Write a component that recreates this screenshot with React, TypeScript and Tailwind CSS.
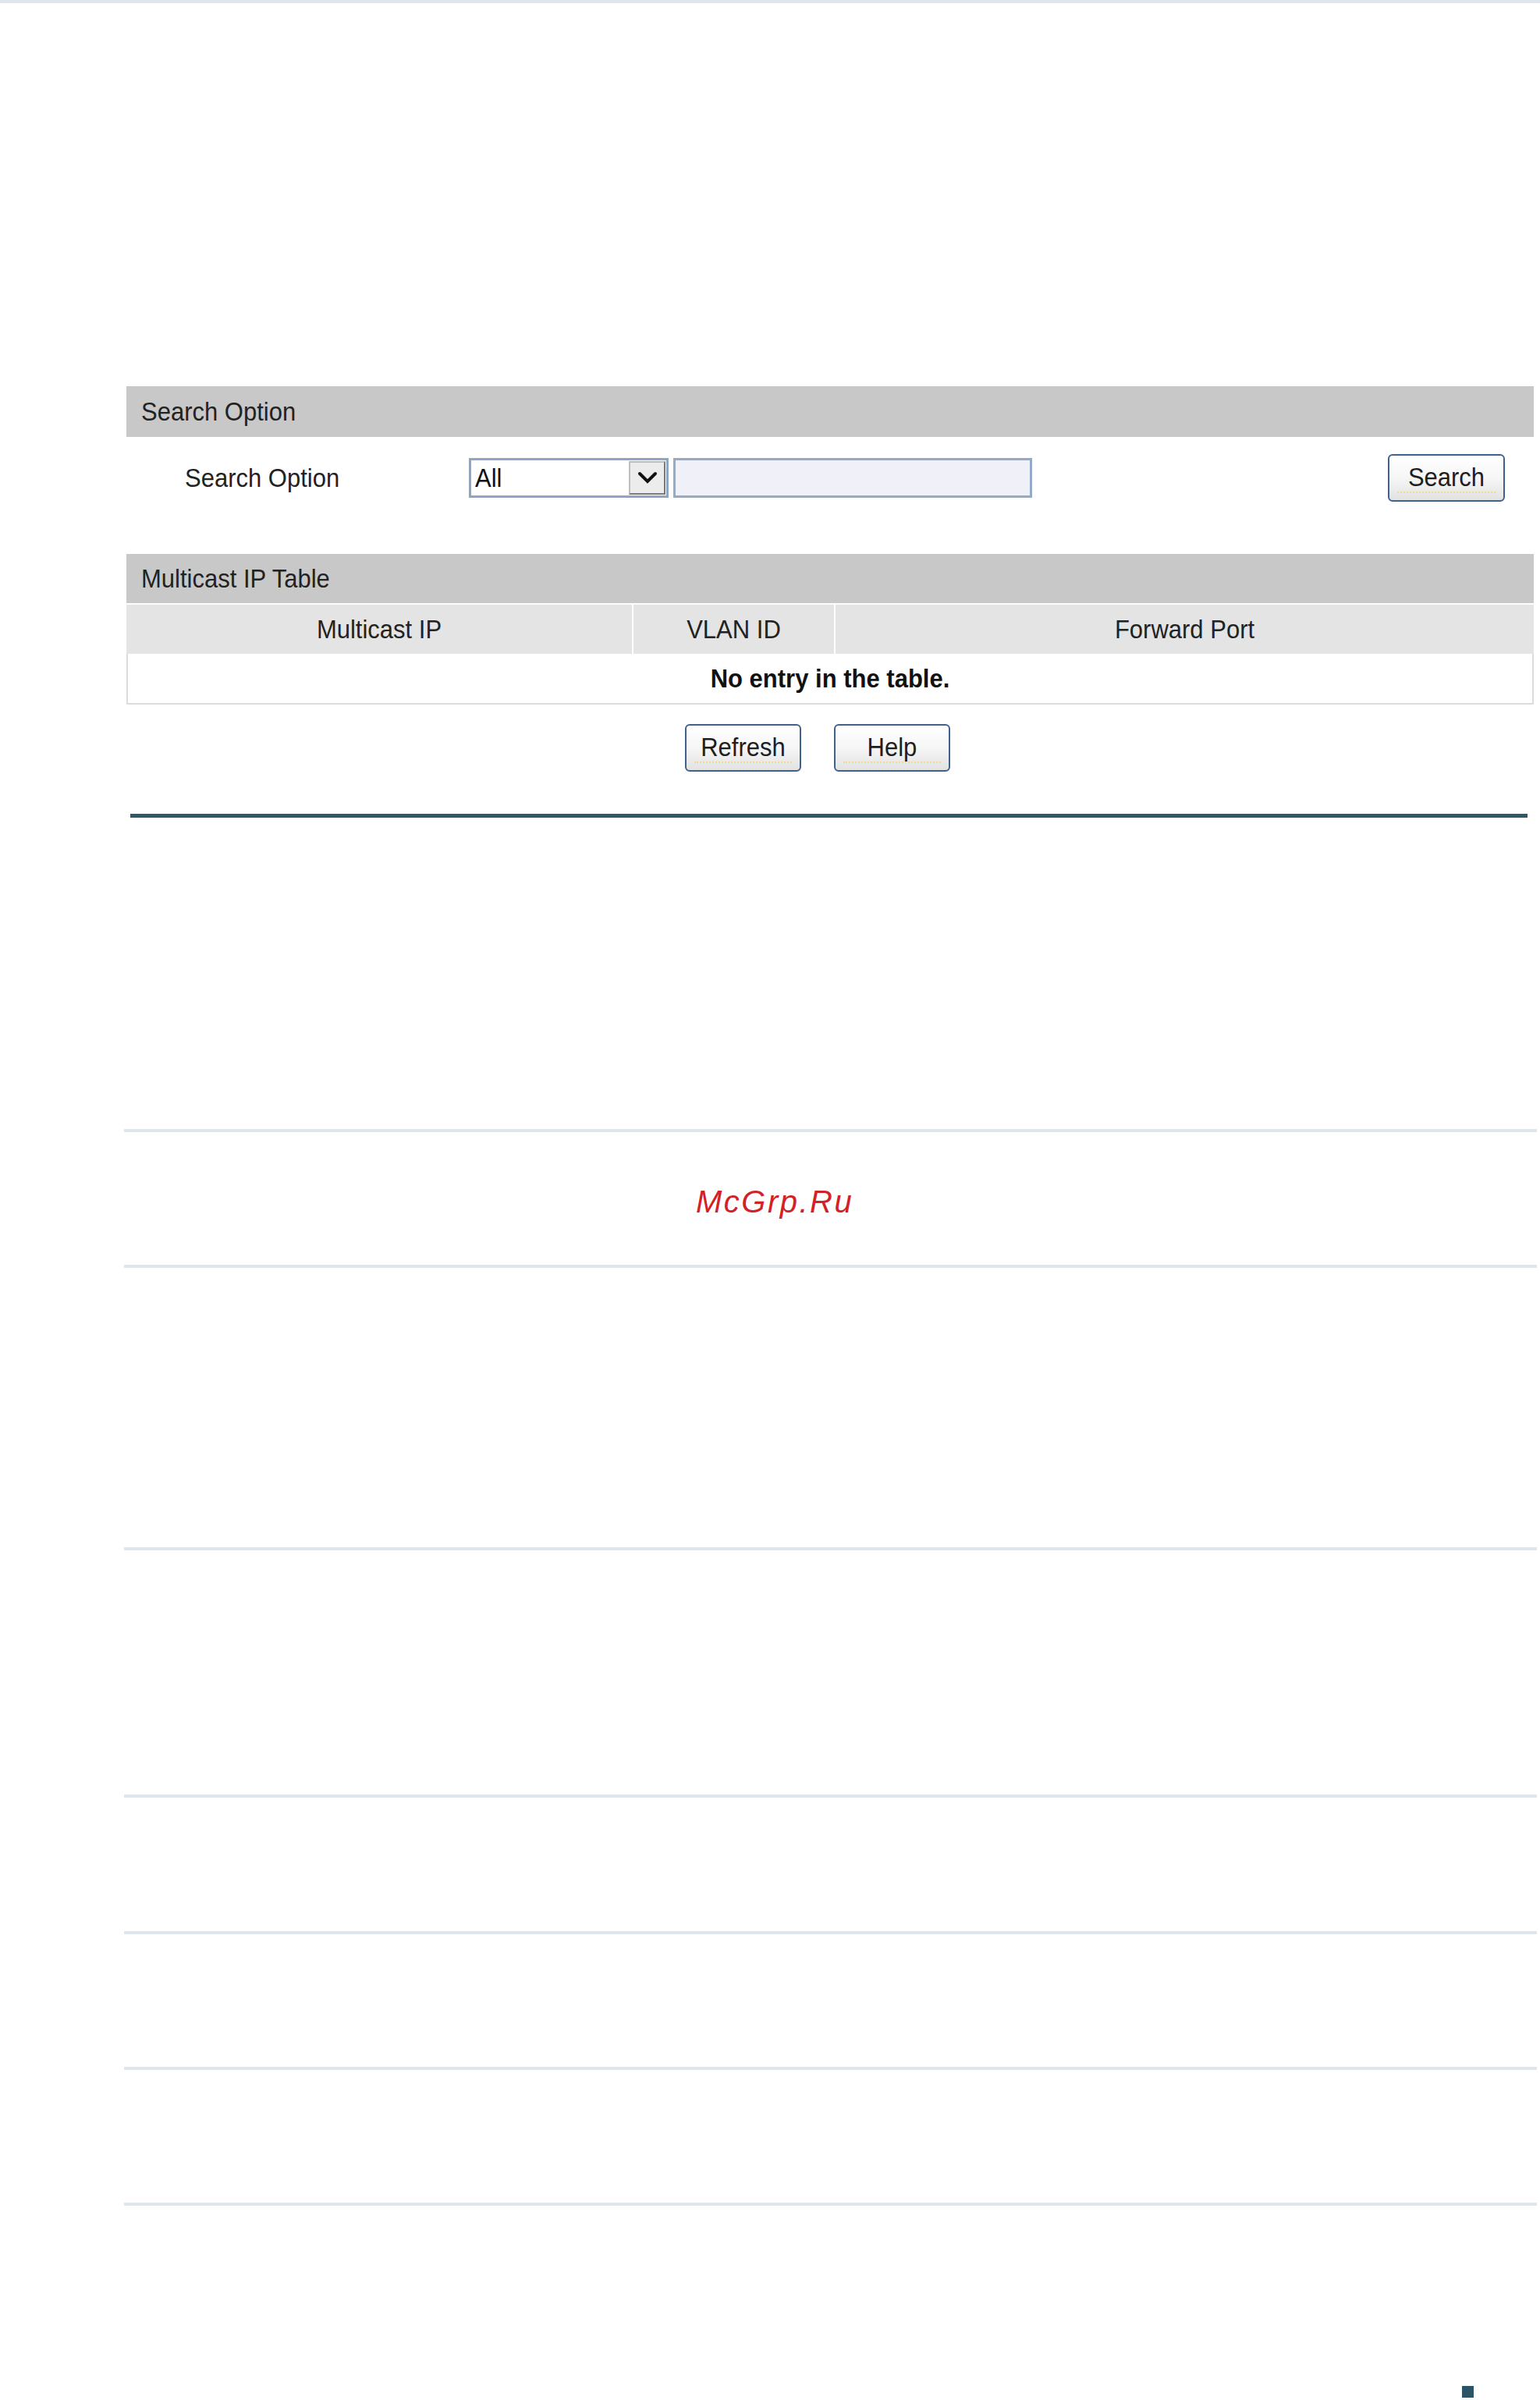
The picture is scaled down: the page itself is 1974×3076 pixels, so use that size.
import React from "react";

function T({ children }: { children: React.ReactNode }) {
  return <span className="inline-block scale-y-[1.1]">{children}</span>;
}

function Btn({ label, w }: { label: string; w: string }) {
  return (
    <div
      className={`relative ${w} h-[61px] rounded-[6px] border-2 border-[#3f6190] bg-gradient-to-b from-white via-[#f6f6f6] to-[#e2e2e2] flex items-center justify-center text-[31px] leading-none text-[#1e1e1e]`}
    >
      <span className="relative -top-[1px] inline-block scale-y-[1.1]">{label}</span>
      <span className="absolute left-[10px] right-[10px] bottom-[9px] border-b-2 border-dotted border-[#efd98f]" />
    </div>
  );
}

function LightLine({ mt }: { mt: string }) {
  return <div className={`${mt} ml-[159px] w-[1811px] h-[4px] bg-[#dde7ec]`} />;
}

export default function App() {
  return (
    <div className="w-[1974px] h-[3076px] bg-white overflow-hidden font-['Liberation_Sans',Arial,sans-serif] text-[#222]">
      <div className="h-[4px] w-full bg-[#dde7ec]" />

      <div className="mt-[491px] ml-[162px] w-[1804px]">
        <div className="h-[65px] bg-[#c8c8c8] flex items-center pl-[19px] text-[31px] leading-none">
          <T>Search Option</T>
        </div>

        <div className="h-[104px] flex items-center pr-[37px]">
          <div className="w-[439px] pl-[75px] text-[31px] leading-none">
            <T>Search Option</T>
          </div>
          <div className="w-[256px] h-[51px] border-[3px] border-[#8ca6c6] bg-white flex items-center justify-between">
            <span className="pl-[5px] text-[31px] leading-none text-[#111]">
              <T>All</T>
            </span>
            <div className="w-[47px] h-[43px] mr-[1px] bg-[#ececec] border-2 border-t-[#bdbdbd] border-l-[#bdbdbd] border-r-[#7a7a7a] border-b-[#7a7a7a] flex items-center justify-center">
              <svg width="26" height="18" viewBox="0 0 26 18">
                <polyline points="3,4 13,14 23,4" fill="none" stroke="#111" strokeWidth="4" strokeLinecap="round" strokeLinejoin="miter" />
              </svg>
            </div>
          </div>
          <div className="ml-[6px] w-[460px] h-[51px] border-[3px] border-[#92abc9] bg-[#eff0f8]" />
          <div className="flex-1" />
          <Btn label="Search" w="w-[150px]" />
        </div>

        <div className="mt-[46px] h-[63px] bg-[#c8c8c8] flex items-center pl-[19px] text-[31px] leading-none">
          <T>Multicast IP Table</T>
        </div>

        <div className="mt-[2px] h-[63px] flex bg-white">
          <div className="w-[648px] bg-[#e4e4e4] flex items-center justify-center text-[31px] leading-none">
            <T>Multicast IP</T>
          </div>
          <div className="w-[2px]" />
          <div className="w-[257px] bg-[#e4e4e4] flex items-center justify-center text-[31px] leading-none">
            <T>VLAN ID</T>
          </div>
          <div className="w-[2px]" />
          <div className="flex-1 bg-[#e4e4e4] flex items-center justify-center text-[31px] leading-none">
            <T>Forward Port</T>
          </div>
        </div>

        <div className="h-[65px] border-x-2 border-b-2 border-[#dcdcdc] flex items-center justify-center font-bold text-[31px] leading-none text-[#111]">
          <T>No entry in the table.</T>
        </div>

        <div className="mt-[25px] pl-[716px] flex gap-[42px]">
          <Btn label="Refresh" w="w-[149px]" />
          <Btn label="Help" w="w-[149px]" />
        </div>
      </div>

      <div className="mt-[54px] ml-[167px] w-[1791px] h-[5px] bg-[#2f5868]" />

      <LightLine mt="mt-[399px]" />
      <div className="mt-[69px] ml-[892px] h-[40px] text-[40px] leading-none italic tracking-[2.5px] text-[#d42027]">
        McGrp.Ru
      </div>
      <LightLine mt="mt-[61px]" />
      <LightLine mt="mt-[358px]" />
      <LightLine mt="mt-[313px]" />
      <LightLine mt="mt-[171px]" />
      <LightLine mt="mt-[170px]" />
      <LightLine mt="mt-[170px]" />

      <div className="mt-[231px] ml-[1874px] w-[15px] h-[15px] bg-[#2a5566]" />
    </div>
  );
}
